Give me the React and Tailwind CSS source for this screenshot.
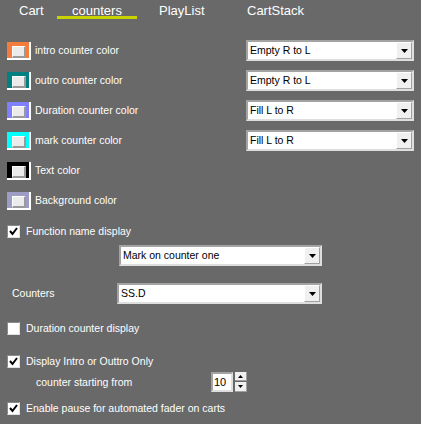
import React from "react";

function Swatch({ color }) {
  return (
    <div className={`ml-[7px] w-[24px] h-[18px] border-r-2 border-b-2 border-white flex items-start`} style={{ background: color }}>
      <div className="ml-[5px] mt-[4px] w-[14px] h-[12px] bg-[#ebebeb] border-t border-l border-white border-r-2 border-b-2 border-r-[#9a9a9a] border-b-[#9a9a9a]" />
    </div>
  );
}

function Arrow({ size = "big" }) {
  return (
    <svg width="7" height="4" viewBox="0 0 7 4">
      <polygon points="0,0 7,0 3.5,4" fill="#000" />
    </svg>
  );
}

function Select({ text, className }) {
  return (
    <div className={`h-[21px] bg-white border-2 border-t-[#a3a3a3] border-l-[#a3a3a3] border-b-[#dedede] border-r-[#dedede] flex items-center ${className}`}>
      <span className="flex-1 pl-[2px] text-[10.5px] text-black leading-none whitespace-nowrap">{text}</span>
      <div className="w-[16px] h-[17px] bg-[#f0f0f0] border-t border-l border-white border-r border-b border-r-[#a0a0a0] border-b-[#a0a0a0] flex items-center justify-center">
        <Arrow />
      </div>
    </div>
  );
}

function Check({ checked }) {
  return (
    <div className="w-[13px] h-[13px] bg-white border border-t-[#8a8a8a] border-l-[#8a8a8a] border-b-[#e0e0e0] border-r-[#e0e0e0] flex items-center justify-center shrink-0">
      {checked && (
        <svg width="9" height="9" viewBox="0 0 9 9">
          <polyline points="1,4 3.5,7 8,1" fill="none" stroke="#000" strokeWidth="2" />
        </svg>
      )}
    </div>
  );
}

function ColorRow({ color, label, select }) {
  return (
    <div className="h-[21px] flex items-center">
      <Swatch color={color} />
      <span className="ml-[4px] text-[10.5px] leading-none whitespace-nowrap">{label}</span>
      {select && <Select text={select} className="ml-auto mr-[7px] w-[168px]" />}
    </div>
  );
}

function CheckRow({ checked, label, className }) {
  return (
    <div className={`h-[13px] flex items-center pl-[7px] ${className}`}>
      <Check checked={checked} />
      <span className="ml-[6px] text-[10.5px] leading-none whitespace-nowrap">{label}</span>
    </div>
  );
}

export default function App() {
  return (
    <div className="w-[421px] h-[424px] bg-[#696969] text-white overflow-hidden font-['Liberation_Sans',Arial,sans-serif]">
      <div className="h-[20px] pt-[3px] flex text-[13px] leading-[16px]">
        <div className="w-[57px] pl-[19px]">Cart</div>
        <div className="relative w-[80px] text-center">
          counters
          <span className="absolute left-0 top-[13px] w-full h-[3px] bg-[#c8d200]" />
        </div>
        <div className="w-[110px] pl-[22px]">PlayList</div>
        <div>CartStack</div>
      </div>

      <div className="mt-[20px] flex flex-col gap-[9px]">
        <ColorRow color="#f47c3c" label="intro counter color" select="Empty R to L" />
        <ColorRow color="#008080" label="outro counter color" select="Empty R to L" />
        <ColorRow color="#8080ff" label="Duration counter color" select="Fill L to R" />
        <ColorRow color="#00ffff" label="mark counter color" select="Fill L to R" />
        <ColorRow color="#000000" label="Text color" />
        <ColorRow color="#9c9cc4" label="Background color" />
      </div>

      <CheckRow checked label="Function name display" className="mt-[14px]" />

      <Select text="Mark on counter one" className="mt-[7px] ml-[119px] w-[203px]" />

      <div className="mt-[17px] h-[21px] flex items-center pl-[12px]">
        <span className="w-[105px] text-[10.5px] leading-none">Counters</span>
        <Select text="SS.D" className="w-[205px]" />
      </div>

      <CheckRow label="Duration counter display" className="mt-[18px]" />
      <CheckRow checked label="Display Intro or Outtro Only" className="mt-[20px]" />

      <div className="mt-[4px] h-[20px] flex items-center">
        <span className="pl-[36px] w-[211px] text-[10.5px] leading-none whitespace-nowrap">counter starting from</span>
        <div className="w-[22px] h-[20px] bg-white border-2 border-t-[#a3a3a3] border-l-[#a3a3a3] border-b-[#dedede] border-r-[#dedede] flex items-center">
          <span className="pl-[1px] text-[11px] text-black leading-none">10</span>
        </div>
        <div className="ml-[2px] flex flex-col gap-[1px]">
          <div className="w-[12px] h-[9px] bg-[#f0f0f0] border-r border-b border-[#a0a0a0] flex items-center justify-center">
            <svg width="5" height="3" viewBox="0 0 5 3"><polygon points="0,3 5,3 2.5,0" fill="#000" /></svg>
          </div>
          <div className="w-[12px] h-[10px] bg-[#f0f0f0] border-r border-b border-[#a0a0a0] flex items-center justify-center">
            <svg width="5" height="3" viewBox="0 0 5 3"><polygon points="0,0 5,0 2.5,3" fill="#000" /></svg>
          </div>
        </div>
      </div>

      <CheckRow checked label="Enable pause for automated fader on carts" className="mt-[10px]" />
    </div>
  );
}
